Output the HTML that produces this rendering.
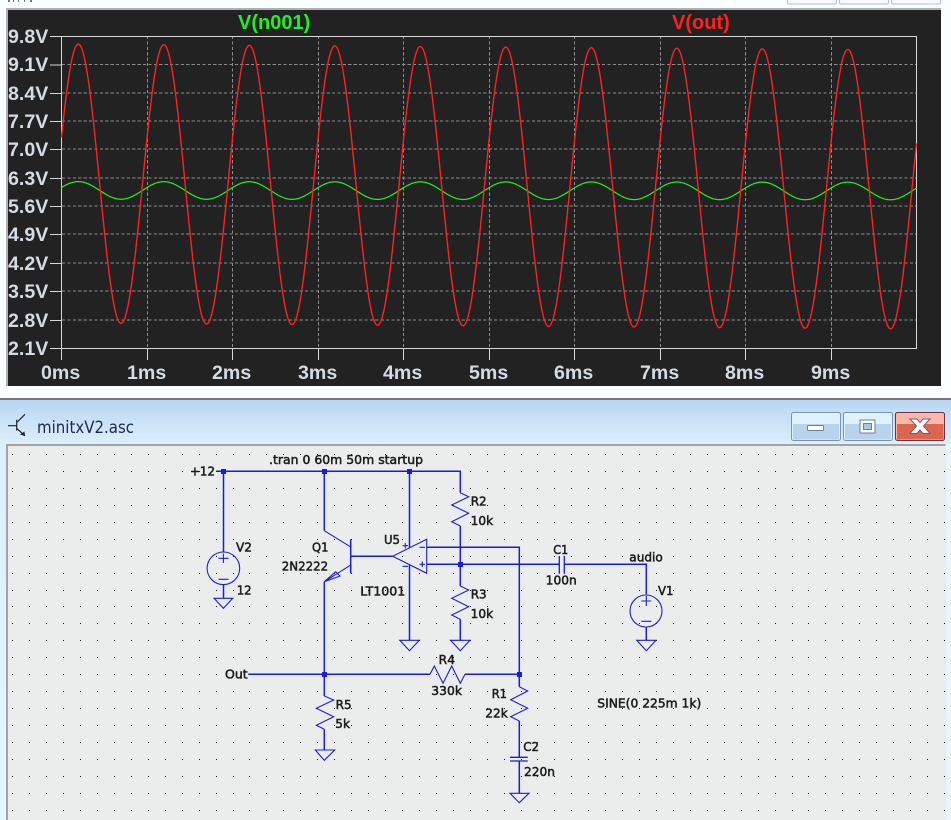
<!DOCTYPE html>
<html><head><meta charset="utf-8"><style>
html,body{margin:0;padding:0;background:#fff}
svg{display:block}
.ax{font:bold 19.6px "Liberation Sans",sans-serif;fill:#d3dbe3}
.sc text{font:12px "DejaVu Sans",sans-serif;fill:#1c1c1c;stroke:#1c1c1c;stroke-width:.5px}
</style></head><body>
<svg xmlns="http://www.w3.org/2000/svg" width="951" height="820" viewBox="0 0 951 820" style="width:951px;height:820px;overflow:hidden">
<defs>
<linearGradient id="tb" x1="0" y1="0" x2="0" y2="1"><stop offset="0" stop-color="#b9d6f4"/><stop offset="1" stop-color="#dceffb"/></linearGradient>
<linearGradient id="fr" x1="0" y1="0" x2="0" y2="1"><stop offset="0" stop-color="#dcf0fc"/><stop offset="1" stop-color="#e2f7ff"/></linearGradient>
</defs>
<rect width="951" height="398" fill="#f9ffff"/>
<!-- top remnants -->
<path d="M8 0h2v2h-2zM13 0h1v2h-1zM18 0h1v2h-1zM24 0h1v2h-1zM30 0h2v2h-2z" fill="#777"/>
<g fill="#f6f9fd" stroke="#b3c0d6"><rect x="787.5" y="-4" width="49" height="8" rx="1.5"/><rect x="839.5" y="-4" width="49" height="8" rx="1.5"/><rect x="891.5" y="-4" width="49" height="8" rx="1.5"/></g>
<!-- plot panel -->
<rect x="6" y="8" width="935" height="378" fill="#b0b0b0"/>
<rect x="8" y="10" width="933" height="376" fill="#222222"/>
<g stroke="#8c8c8c" stroke-width="1" stroke-dasharray="3.2 2.2" shape-rendering="crispEdges" id="grid"></g>
<g stroke="#d8d8d8" stroke-width="1" fill="none" shape-rendering="crispEdges" id="axes"></g>
<path id="green" fill="none" stroke="#22f022" stroke-width="1.2"/>
<path id="red" fill="none" stroke="#ff2020" stroke-width="1.4"/>
<g class="ax" id="yl">
<text x="8" y="43">9.8V</text><text x="8" y="71">9.1V</text><text x="8" y="100">8.4V</text><text x="8" y="128">7.7V</text><text x="8" y="156">7.0V</text><text x="8" y="185">6.3V</text><text x="8" y="213">5.6V</text><text x="8" y="241">4.9V</text><text x="8" y="270">4.2V</text><text x="8" y="298">3.5V</text><text x="8" y="327">2.8V</text><text x="8" y="355">2.1V</text>
<text x="41" y="379">0ms</text><text x="127" y="379">1ms</text><text x="212" y="379">2ms</text><text x="298" y="379">3ms</text><text x="383" y="379">4ms</text><text x="469" y="379">5ms</text><text x="554" y="379">6ms</text><text x="640" y="379">7ms</text><text x="725" y="379">8ms</text><text x="811" y="379">9ms</text>
</g>
<text x="238" y="29" style="font:bold 20px 'Liberation Sans',sans-serif" fill="#22f022">V(n001)</text>
<text x="672" y="29" style="font:bold 20px 'Liberation Sans',sans-serif" fill="#ff2020">V(out)</text>

<!-- lower window -->
<rect x="0" y="386" width="951" height="12" fill="#fbffff"/>
<rect x="0" y="398" width="951" height="2" fill="#777"/>
<rect x="0" y="400" width="951" height="44" fill="url(#tb)"/>
<rect x="0" y="444" width="7" height="376" fill="url(#fr)"/>
<rect x="946" y="444" width="5" height="376" fill="#e6f7fe"/>
<rect x="6" y="444" width="940" height="376" fill="#a3a3a3"/>
<rect x="8" y="446" width="938" height="374" fill="#ebeded"/>
<rect x="945" y="444" width="1" height="2" fill="#c8d0d8"/>
<!-- icon -->
<g stroke="#222" stroke-width="1.2" fill="none"><path d="M8 425.7H16.7M16.7 419.7V430.5"/><path d="M17.3 422L25 414.3M17.3 429L25 435.7"/></g><path d="M20 434.5L24.5 431.5L25 436Z" fill="#222"/>
<text x="37" y="433" textLength="97" lengthAdjust="spacingAndGlyphs" style="font:17px 'DejaVu Sans',sans-serif" fill="#23294a">minitxV2.asc</text>
<!-- buttons -->
<g stroke="#7d92ac" stroke-width="1">
<rect x="791.5" y="412.5" width="49" height="28" rx="2" fill="#def3fe"/>
<rect x="843.5" y="412.5" width="49" height="28" rx="2" fill="#def3fe"/>
<rect x="895.5" y="412.5" width="49" height="28" rx="2" fill="#fbb8a8" stroke="#723040"/>
</g>
<rect x="793" y="424" width="46" height="15.5" fill="#b9d3ef"/>
<rect x="845" y="424" width="46" height="15.5" fill="#b9d3ef"/>
<rect x="897" y="424" width="46.500" height="15.500" fill="#dd6650"/>
<rect x="807.500" y="425.500" width="16" height="5" rx="1" fill="#fff" stroke="#6f7f98"/>
<rect x="860" y="420" width="15" height="13" fill="#fff" stroke="#6f7f98"/><rect x="863.500" y="423.500" width="8" height="6" fill="#a9c6e6" stroke="#6f7f98"/>
<path d="M910 419h7l3 3.500l3-3.500h7l-6.500 7l6.500 7.500h-7l-3-3.500l-3 3.500h-7l6.500-7.500z" fill="#fff" stroke="#7a5a68"/>
<!-- dots -->
<path id="dots" fill="#111" shape-rendering="crispEdges"/>
<!-- schematic wires -->
<g fill="none" stroke="#1a1ae8" stroke-width="1.500">
<path d="M216 471.300H460.300V492.700M223.500 471.300V552M324.300 471.300V530.700M409.500 471.300V548M460.300 526V586M460.300 619.300V640.300M409.500 565V640.300M223.500 584.700V598.300M350.700 556.300H393.300"/>
<path d="M426.700 564.300H559.300M564.300 564.300H646.300V594.300M646.300 627V640.300M426.700 547.300H519.300V686.700M519.300 721V757.300M519.300 761V793.300"/>
<path d="M248.300 674.300H430M465 674.300H519.300M324.300 581.700V696M324.300 729.300V750"/>
<path d="M350.700 539.300V573.300" />
<path d="M559.300 556V573.700M564.300 556V573.700M510 757.300H527.700M510 761H527.700" stroke-width="1.300"/>
</g>
<g fill="none" stroke="#1f1fd8" stroke-width="1.100">
<path d="M460.300 492.700L468.700 496.700L451.700 505L468.700 513.300L451.700 521.700L460.300 526"/>
<path d="M460.300 586L468.700 590L451.700 598.300L468.700 606.700L451.700 615L460.300 619.300"/>
<path d="M430 674.300L434.300 666L443 683.300L451.700 666L460.300 683.300L465 674.300"/>
<path d="M519.300 686.700L527.700 691L510.700 699.700L527.700 708.300L510.700 716.700L519.300 721"/>
<path d="M324.300 696L333.700 700L316.300 708.300L333.700 716.700L316.300 725.300L324.300 729.300"/>
<path d="M392.700 556.300L426.700 539.300V573.300Z"/>
<path d="M324.300 530.700L350.300 546.700M350.300 565.300L324.300 581.700M324.300 581.700L335.700 571.700L340 576Z"/>
<circle cx="223.400" cy="568.300" r="16.300"/><circle cx="646" cy="611" r="16"/>
<path d="M218.500 558.300H228.500M223.400 553.500V563M218.500 579.300H228.500M641.300 601H651.300M646.300 596V606M641.300 621.300H651.300"/>
<path d="M419.500 547.300H425M419.500 564.300H425M422.300 561.500V567M402.500 545.700H408M405.300 543V548.500M402.500 566.300H408"/>
<path d="M214 598.300H232.700L223.400 608.300ZM399.700 640.300H419.300L409.500 650.700ZM450.500 640.300H470L460.300 650.700ZM636.700 640.300H656L646.300 650.700ZM315.300 750H334.700L324.300 760.300ZM510 793.300H529L519.300 802.700Z"/>
</g>
<g fill="#1a1ae8">
<rect x="221" y="469" width="5" height="5"/><rect x="322" y="469" width="5" height="5"/><rect x="407" y="469" width="5" height="5"/><rect x="458" y="562" width="5" height="5"/><rect x="322" y="672" width="5" height="5"/><rect x="517" y="672" width="5" height="5"/>
</g>
<!-- schematic text -->
<g class="sc">
<text x="190" y="475.500" textLength="25" lengthAdjust="spacingAndGlyphs">+12</text>
<text x="269" y="464" textLength="154" lengthAdjust="spacingAndGlyphs">.tran 0 60m 50m startup</text>
<text x="236" y="551.500" textLength="16" lengthAdjust="spacingAndGlyphs">V2</text>
<text x="236.700" y="594.700" textLength="15" lengthAdjust="spacingAndGlyphs">12</text>
<text x="312" y="551.500" textLength="16.500" lengthAdjust="spacingAndGlyphs">Q1</text>
<text x="281.700" y="570.700" textLength="46.500" lengthAdjust="spacingAndGlyphs">2N2222</text>
<text x="384" y="544" textLength="16" lengthAdjust="spacingAndGlyphs">U5</text>
<text x="360.300" y="595.700" textLength="45" lengthAdjust="spacingAndGlyphs">LT1001</text>
<text x="470.700" y="505.700" textLength="16" lengthAdjust="spacingAndGlyphs">R2</text>
<text x="470.700" y="525" textLength="22.500" lengthAdjust="spacingAndGlyphs">10k</text>
<text x="470.700" y="598.700" textLength="16" lengthAdjust="spacingAndGlyphs">R3</text>
<text x="470.700" y="618" textLength="22.500" lengthAdjust="spacingAndGlyphs">10k</text>
<text x="553.300" y="554" textLength="15" lengthAdjust="spacingAndGlyphs">C1</text>
<text x="545.700" y="584.700" textLength="31" lengthAdjust="spacingAndGlyphs">100n</text>
<text x="629.300" y="561.700" textLength="33.500" lengthAdjust="spacingAndGlyphs">audio</text>
<text x="658" y="595" textLength="15.500" lengthAdjust="spacingAndGlyphs">V1</text>
<text x="225" y="678.700" textLength="22.700" lengthAdjust="spacingAndGlyphs">Out</text>
<text x="438.700" y="664" textLength="16.300" lengthAdjust="spacingAndGlyphs">R4</text>
<text x="431.300" y="695" textLength="30.700" lengthAdjust="spacingAndGlyphs">330k</text>
<text x="335.700" y="709" textLength="16" lengthAdjust="spacingAndGlyphs">R5</text>
<text x="335.300" y="728" textLength="14.700" lengthAdjust="spacingAndGlyphs">5k</text>
<text x="491.700" y="698" textLength="15.300" lengthAdjust="spacingAndGlyphs">R1</text>
<text x="485.300" y="717.300" textLength="22.400" lengthAdjust="spacingAndGlyphs">22k</text>
<text x="523.300" y="751" textLength="15.700" lengthAdjust="spacingAndGlyphs">C2</text>
<text x="524" y="776" textLength="31" lengthAdjust="spacingAndGlyphs">220n</text>
<text x="597.300" y="707.300" textLength="104" lengthAdjust="spacingAndGlyphs">SINE(0 225m 1k)</text>
</g>
<script>
(function(){
var d=document,i,s='';
var g=d.getElementById('grid'),a=d.getElementById('axes'),NS='http://www.w3.org/2000/svg';
function ln(p,x1,y1,x2,y2){var l=d.createElementNS(NS,'line');l.setAttribute('x1',x1);l.setAttribute('y1',y1);l.setAttribute('x2',x2);l.setAttribute('y2',y2);p.appendChild(l);}
var ys=[36,64.5,93,121,149,178,206,234,263,291,320,348];
var xs=[61.5,147.5,232.5,318.5,403.5,489.5,574.5,660.5,745.5,831.5];
for(i=1;i<11;i++)ln(g,62,ys[i],916,ys[i]);
for(i=1;i<10;i++)ln(g,xs[i],36,xs[i],348);
ln(a,50,36.5,916.5,36.5);ln(a,50,348.5,916.5,348.5);ln(a,61.5,36,61.5,360);ln(a,916.5,36,916.5,349);
for(i=1;i<11;i++)ln(a,50,ys[i]+.5,62,ys[i]+.5);
for(i=1;i<10;i++)ln(a,xs[i],348,xs[i],360);
var r='',gr='',x;
for(x=61.5;x<=916.5;x+=.5){
 var th=(x-78.3)/85.5*2*Math.PI,c=Math.cos(th),t=(x-61.5)/855;
 r+=(r?'L':'M')+x+' '+(183.5+t*6-139.5*c).toFixed(2);
 gr+=(gr?'L':'M')+x+' '+(190.4+t*.6-8.8*c).toFixed(2);
}
d.getElementById('red').setAttribute('d',r);
d.getElementById('green').setAttribute('d',gr);
var m,n;
for(m=0;m<22;m++)for(n=0;n<56;n++){
 s+='M'+Math.round(12.3+16.94*n)+' '+Math.round(454+16.94*m)+'h1.2v1.2h-1.2z';
}
d.getElementById('dots').setAttribute('d',s);
})();
</script>
</svg>
</body></html>
